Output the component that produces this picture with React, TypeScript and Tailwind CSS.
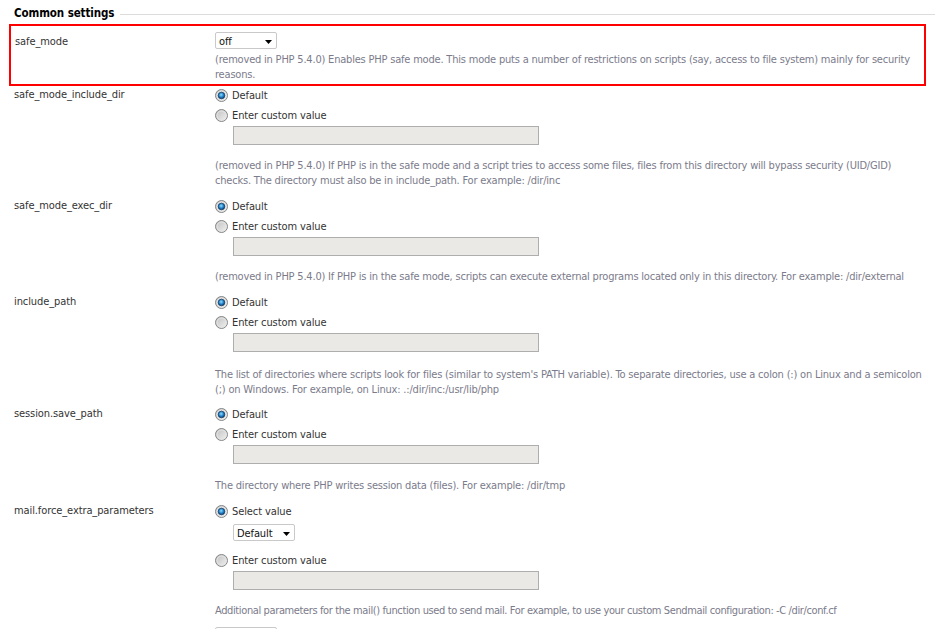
import React from "react";

function Radio({ checked }: { checked?: boolean }) {
  const id = checked ? "rc" : "ru";
  return (
    <svg width="13" height="13" viewBox="0 0 13 13" className="shrink-0">
      <defs>
        <linearGradient id={id + "g"} x1="0" y1="0" x2="1" y2="1">
          <stop offset="0" stopColor="#bdbdbd" />
          <stop offset="1" stopColor="#f4f4f4" />
        </linearGradient>
        <radialGradient id={id + "d"} cx="0.45" cy="0.4" r="0.6">
          <stop offset="0" stopColor="#8fdcff" />
          <stop offset="0.6" stopColor="#1f7fc4" />
          <stop offset="1" stopColor="#0d3c6b" />
        </radialGradient>
      </defs>
      <circle cx="6.5" cy="6.5" r="6" fill={`url(#${id}g)`} stroke="#858686" strokeWidth="1" />
      <circle cx="6.5" cy="6.5" r="4.5" fill="none" stroke="#e4e4e4" strokeWidth="1" />
      {checked && <circle cx="6.5" cy="6.5" r="3.3" fill={`url(#${id}d)`} stroke="#0f3a66" strokeWidth="0.7" />}
    </svg>
  );
}

function Select({ value, className = "" }: { value: string; className?: string }) {
  return (
    <div className={"flex items-center justify-between h-[17px] w-[62px] bg-white border border-[#c9c9c9] rounded-[2px] pl-[3px] pr-[4px] text-[#111] shrink-0 " + className}>
      <span className="leading-[15px] pt-[1px]">{value}</span>
      <svg width="7" height="4" viewBox="0 0 7 4" className="mt-[3px]">
        <path d="M0 0H7L3.5 4Z" fill="#000" />
      </svg>
    </div>
  );
}

function Input() {
  return <div className="ml-[18px] mt-[1px] h-[19px] w-[306px] bg-[#ebe9e5] border border-[#aeaeae]" />;
}

function Desc({ lines, className = "" }: { lines: string[]; className?: string }) {
  return (
    <div className={"text-[#7b7b8b] leading-[15px] tracking-[-0.2px] " + className}>
      {lines.map((l, i) => (
        <div key={i} className="whitespace-nowrap">{l}</div>
      ))}
    </div>
  );
}

function Opt({ checked, label, className = "" }: { checked?: boolean; label: string; className?: string }) {
  return (
    <div className={"flex items-center h-[20px] gap-[4px] " + className}>
      <Radio checked={checked} />
      <span className="leading-[15px]">{label}</span>
    </div>
  );
}

function PathRow({ name, desc, className = "", descClass = "mt-[13px]" }: { name: string; desc: string[]; className?: string; descClass?: string }) {
  return (
    <div className={"flex " + className}>
      <div className="w-[215px] shrink-0 pl-[14px] h-[20px] flex items-center text-[#333]">{name}</div>
      <div className="flex flex-col text-[#333]">
        <Opt checked label="Default" />
        <Opt label="Enter custom value" />
        <Input />
        <Desc lines={desc} className={descClass} />
      </div>
    </div>
  );
}

export default function App() {
  return (
    <div className="w-[935px] h-[629px] overflow-hidden bg-white font-['DejaVu_Sans_Condensed','Liberation_Sans',sans-serif] text-[11px] tracking-[-0.1px]">
      <div className="flex items-center h-[24px] pl-[14px] pt-[2px]">
        <span className="font-bold text-black text-[11.5px] leading-[15px]">Common settings</span>
        <div className="flex-1 h-px bg-[#dcdcdc] ml-[6px] mt-[2px]" />
      </div>
      <div className="ml-[9px] w-[917px] h-[62px] border-2 border-[#ff0000] flex">
        <div className="w-[204px] shrink-0 pl-[4px] pt-[8px] leading-[15px] text-[#333]">safe_mode</div>
        <div className="flex flex-col pt-[6px]">
          <Select value="off" />
          <Desc
            className="mt-[3px]"
            lines={[
              "(removed in PHP 5.4.0) Enables PHP safe mode. This mode puts a number of restrictions on scripts (say, access to file system) mainly for security",
              "reasons.",
            ]}
          />
        </div>
      </div>
      <PathRow
        className="-mt-[1px]"
        name="safe_mode_include_dir"
        desc={[
          "(removed in PHP 5.4.0) If PHP is in the safe mode and a script tries to access some files, files from this directory will bypass security (UID/GID)",
          "checks. The directory must also be in include_path. For example: /dir/inc",
        ]}
      />
      <PathRow
        className="mt-[8px]"
        name="safe_mode_exec_dir"
        desc={[
          "(removed in PHP 5.4.0) If PHP is in the safe mode, scripts can execute external programs located only in this directory. For example: /dir/external",
        ]}
      />
      <PathRow
        className="mt-[8px]"
        name="include_path"
        descClass="mt-[15px]"
        desc={[
          "The list of directories where scripts look for files (similar to system's PATH variable). To separate directories, use a colon (:) on Linux and a semicolon",
          "(;) on Windows. For example, on Linux: .:/dir/inc:/usr/lib/php",
        ]}
      />
      <PathRow
        className="mt-[7px]"
        name="session.save_path"
        descClass="mt-[14px]"
        desc={["The directory where PHP writes session data (files). For example: /dir/tmp"]}
      />
      <div className="flex mt-[8px]">
        <div className="w-[215px] shrink-0 pl-[14px] h-[20px] flex items-center text-[#333]">mail.force_extra_parameters</div>
        <div className="flex flex-col text-[#333]">
          <Opt checked label="Select value" />
          <Select value="Default" className="ml-[18px] mt-[3px]" />
          <Opt label="Enter custom value" className="mt-[9px]" />
          <Input />
          <div className="mt-[13px] text-[#7b7b8b] leading-[15px] tracking-[-0.38px] whitespace-nowrap">
            Additional parameters for the mail() function used to send mail. For example, to use your custom Sendmail configuration: -C /dir/conf.cf
          </div>
          <div className="mt-[9px] h-[17px] w-[62px] bg-white border border-[#c9c9c9] rounded-[2px]" />
        </div>
      </div>
    </div>
  );
}
